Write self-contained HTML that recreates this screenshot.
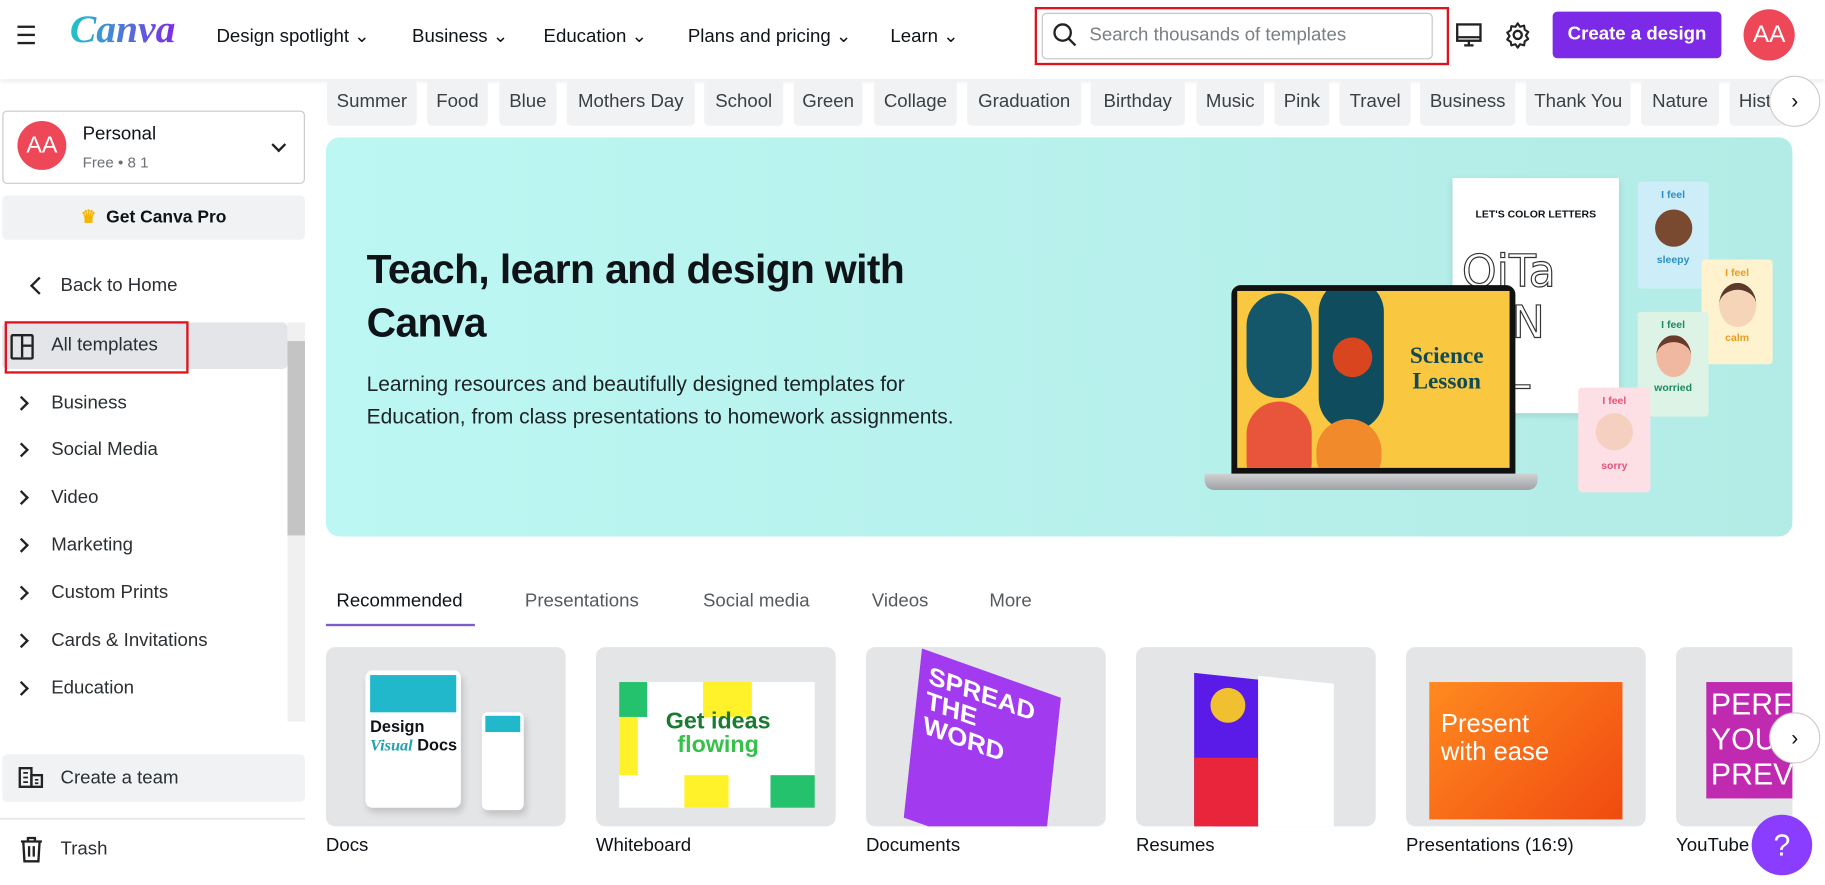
<!DOCTYPE html>
<html><head><meta charset="utf-8"><style>
html,body{margin:0;padding:0;width:1825px;height:884px;overflow:hidden;background:#fff}
#w{position:absolute;left:0;top:0;width:1568px;height:760px;transform:scale(1.1639);transform-origin:0 0;font-family:"Liberation Sans",sans-serif;color:#0e1318}
.a{position:absolute}
.nav{font-size:16px;top:21px}
.chip{position:absolute;top:68px;height:40px;line-height:40px;background:#f1f2f4;border-radius:4px;font-size:16px;color:#3b4044;text-align:center}
.side{position:absolute;left:44px;font-size:16px;color:#2a2f33}
.chev{position:absolute;left:14px;width:7px;height:7px;border-right:2px solid #222;border-top:2px solid #222;transform:rotate(45deg)}
.card{position:absolute;top:556px;width:206px;height:154px;background:#e4e5e7;border-radius:8px;overflow:hidden}
.lbl{position:absolute;top:718px;font-size:16px}
.tab{position:absolute;top:508px;font-size:16px;color:#555a5e}
</style></head><body><div id="w">
<div class="a" style="left:0;top:0;width:1568px;height:68px;background:#fff;box-shadow:0 2px 4px rgba(0,0,0,.08)"></div>
<div class="a" style="left:15px;top:22px;width:15px;height:2px;background:#222;box-shadow:0 7px 0 #222,0 14px 0 #222"></div>
<div class="a" style="left:60px;top:7px;font-family:'Liberation Serif',serif;font-style:italic;font-weight:bold;font-size:34px;background:linear-gradient(90deg,#20c4cb,#7d2ae8);-webkit-background-clip:text;color:transparent">Canva</div>
<div class="a nav" style="left:186px">Design spotlight ⌄</div>
<div class="a nav" style="left:354px">Business ⌄</div>
<div class="a nav" style="left:467px">Education ⌄</div>
<div class="a nav" style="left:591px">Plans and pricing ⌄</div>
<div class="a nav" style="left:765px">Learn ⌄</div>
<div class="a" style="left:889px;top:6px;width:352px;height:46px;border:2px solid #e0131d"></div>
<div class="a" style="left:895px;top:11px;width:334px;height:38px;border:1px solid #c4c6c9;border-radius:4px"></div>
<svg class="a" style="left:904px;top:19px" width="22" height="22" viewBox="0 0 22 22"><circle cx="9" cy="9" r="7" fill="none" stroke="#222" stroke-width="2"/><path d="M14 14l6 6" stroke="#222" stroke-width="2"/></svg>
<div class="a" style="left:936px;top:22px;font-size:16px;color:#7a7f83">Search thousands of templates</div>
<svg class="a" style="left:1250px;top:18px" width="24" height="24" viewBox="0 0 24 24"><rect x="2" y="3" width="20" height="14" fill="none" stroke="#222" stroke-width="2"/><path d="M2 14h20M8 21h8M12 17v4" stroke="#222" stroke-width="2"/></svg>
<svg class="a" style="left:1292px;top:18px" width="24" height="24" viewBox="0 0 24 24"><circle cx="12" cy="12" r="3.5" fill="none" stroke="#222" stroke-width="2"/><path d="M12 2l2 3 3.5-1 .5 3.5 3 2-2 3 2 3-3 2-.5 3.5-3.5-1-2 3-2-3-3.5 1L6 18l-3-2 2-3-2-3 3-2 .5-3.5L10 5z" fill="none" stroke="#222" stroke-width="1.8" stroke-linejoin="round"/></svg>
<div class="a" style="left:1334px;top:10px;width:145px;height:40px;background:#7d2ae8;border-radius:4px;color:#fff;font-weight:bold;font-size:16px;line-height:40px;text-align:center">Create a design</div>
<div class="a" style="left:1498px;top:8px;width:44px;height:44px;border-radius:50%;background:#ee4758;color:#fff;font-size:21px;line-height:44px;text-align:center">AA</div>
<div class="chip" style="left:281px;width:77px">Summer</div>
<div class="chip" style="left:367px;width:52px">Food</div>
<div class="chip" style="left:429px;width:49px">Blue</div>
<div class="chip" style="left:487px;width:110px">Mothers Day</div>
<div class="chip" style="left:605px;width:68px">School</div>
<div class="chip" style="left:682px;width:59px">Green</div>
<div class="chip" style="left:751px;width:71px">Collage</div>
<div class="chip" style="left:831px;width:98px">Graduation</div>
<div class="chip" style="left:937px;width:81px">Birthday</div>
<div class="chip" style="left:1028px;width:58px">Music</div>
<div class="chip" style="left:1095px;width:47px">Pink</div>
<div class="chip" style="left:1151px;width:61px">Travel</div>
<div class="chip" style="left:1220px;width:82px">Business</div>
<div class="chip" style="left:1311px;width:90px">Thank You</div>
<div class="chip" style="left:1410px;width:67px">Nature</div>
<div class="chip" style="left:1486px;width:50px;text-align:left;padding-left:8px;overflow:hidden">History</div>
<div class="a" style="left:1520px;top:65px;width:44px;height:44px;border-radius:50%;background:#fff;border:1px solid #ccc;box-sizing:border-box;text-align:center;line-height:42px;font-size:18px">›</div>
<div class="a" style="left:2px;top:95px;width:260px;height:63px;border:1px solid #c8c9cc;border-radius:4px;box-sizing:border-box"></div>
<div class="a" style="left:15px;top:104px;width:42px;height:42px;border-radius:50%;background:#ee4758;color:#fff;font-size:20px;line-height:42px;text-align:center">AA</div>
<div class="a" style="left:71px;top:107px;font-size:16px">Personal</div>
<div class="a" style="left:71px;top:132px;font-size:13px;color:#6b7075">Free • 8 1</div>
<div class="a" style="left:235px;top:120px;width:7px;height:7px;border-right:2px solid #222;border-bottom:2px solid #222;transform:rotate(45deg)"></div>
<div class="a" style="left:2px;top:168px;width:260px;height:38px;background:#f1f2f4;border-radius:4px;text-align:center;line-height:38px;font-size:15px;font-weight:bold"><span style="color:#f5b400">♛</span>&nbsp; Get Canva Pro</div>
<div class="a" style="left:28px;top:240px;width:9px;height:9px;border-left:2px solid #222;border-bottom:2px solid #222;transform:rotate(45deg)"></div>
<div class="side" style="left:52px;top:237px">Back to Home</div>
<div class="a" style="left:2px;top:277px;width:245px;height:40px;background:#e3e5e8;border-radius:4px"></div>
<div class="a" style="left:4px;top:276px;width:154px;height:41px;border:2px solid #e0131d"></div>
<div class="a" style="left:9px;top:287px;width:16px;height:18px;border:2px solid #222;border-radius:2px"></div>
<div class="a" style="left:18px;top:287px;width:2px;height:20px;background:#222"></div>
<div class="a" style="left:19px;top:296px;width:8px;height:2px;background:#222"></div>
<div class="side" style="top:288px">All templates</div>
<div class="a" style="left:247px;top:277px;width:15px;height:343px;background:#f0f0f0"></div>
<div class="a" style="left:247px;top:293px;width:15px;height:167px;background:#c4c4c4"></div>
<div class="chev" style="top:342px"></div><div class="side" style="top:338px">Business</div>
<div class="chev" style="top:382px"></div><div class="side" style="top:378px">Social Media</div>
<div class="chev" style="top:423px"></div><div class="side" style="top:419px">Video</div>
<div class="chev" style="top:464px"></div><div class="side" style="top:460px">Marketing</div>
<div class="chev" style="top:505px"></div><div class="side" style="top:501px">Custom Prints</div>
<div class="chev" style="top:546px"></div><div class="side" style="top:542px">Cards &amp; Invitations</div>
<div class="chev" style="top:587px"></div><div class="side" style="top:583px">Education</div>
<div class="a" style="left:2px;top:648px;width:260px;height:41px;background:#f1f2f4;border-radius:4px"></div>
<svg class="a" style="left:15px;top:658px" width="24" height="20" viewBox="0 0 24 20"><rect x="2" y="2" width="10" height="16" fill="none" stroke="#222" stroke-width="2"/><rect x="12" y="8" width="9" height="10" fill="none" stroke="#222" stroke-width="2"/><path d="M5 6h4M5 10h4M5 14h4M15 12h3M15 15h3" stroke="#222" stroke-width="1.5"/></svg>
<div class="side" style="left:52px;top:660px">Create a team</div>
<div class="a" style="left:0;top:703px;width:262px;height:1px;background:#dadbdd"></div>
<svg class="a" style="left:16px;top:718px" width="22" height="24" viewBox="0 0 22 24"><path d="M2 5h18M8 5V2h6v3M4 5l1 17h12l1-17M9 9v9M13 9v9" fill="none" stroke="#222" stroke-width="2"/></svg>
<div class="side" style="left:52px;top:721px">Trash</div>
<div class="a" style="left:280px;top:118px;width:1260px;height:343px;border-radius:12px;background:linear-gradient(90deg,#bcf7f3,#b3ebe6);overflow:hidden">
 <div class="a" style="left:35px;top:91px;font-size:35px;font-weight:bold;line-height:46px;letter-spacing:-.5px">Teach, learn and design with<br>Canva</div>
 <div class="a" style="left:35px;top:198px;font-size:18px;line-height:28px;color:#1d2226">Learning resources and beautifully designed templates for<br>Education, from class presentations to homework assignments.</div>
 <div class="a" style="left:968px;top:35px;width:143px;height:202px;background:#fff;box-shadow:0 2px 6px rgba(0,0,0,.12);overflow:hidden">
  <div class="a" style="left:0;top:26px;width:143px;text-align:center;font-size:9px;font-weight:bold">LET'S COLOR LETTERS</div>
  <div class="a" style="left:8px;top:58px;font-size:38px;color:#fff;-webkit-text-stroke:1px #333;line-height:44px;font-family:'DejaVu Sans',sans-serif">QiTa<br>GfN<br>krL</div>
 </div>
 <div class="a" style="left:1127px;top:38px;width:61px;height:92px;background:#cdeef9;border-radius:3px;text-align:center;font-size:9px;color:#2a8fc7;font-weight:bold;padding-top:6px;box-sizing:border-box">I feel<div style="width:32px;height:32px;border-radius:50%;background:#7a4a30;margin:8px auto 6px"></div>sleepy</div>
 <div class="a" style="left:1182px;top:105px;width:61px;height:90px;background:#fff3cf;border-radius:3px;text-align:center;font-size:9px;color:#e99b22;font-weight:bold;padding-top:6px;box-sizing:border-box">I feel<div style="width:32px;height:32px;border-radius:50%;background:#f5d4b8;border-top:6px solid #5a3a2a;margin:4px auto 4px"></div>calm</div>
 <div class="a" style="left:1127px;top:150px;width:61px;height:90px;background:#dcf3e6;border-radius:3px;text-align:center;font-size:9px;color:#1e8a5e;font-weight:bold;padding-top:6px;box-sizing:border-box">I feel<div style="width:30px;height:30px;border-radius:50%;background:#f0b8a0;border-top:6px solid #6a3a2a;margin:4px auto 4px"></div>worried</div>
 <div class="a" style="left:1076px;top:215px;width:62px;height:90px;background:#fde0e6;border-radius:3px;text-align:center;font-size:9px;color:#e5527a;font-weight:bold;padding-top:6px;box-sizing:border-box">I feel<div style="width:32px;height:32px;border-radius:50%;background:#f5d0c0;margin:6px auto 8px"></div>sorry</div>
 <div class="a" style="left:778px;top:127px;width:244px;height:162px;background:#111;border-radius:8px 8px 0 0"></div>
 <div class="a" style="left:783px;top:132px;width:234px;height:152px;background:#f9c840;overflow:hidden">
  <div class="a" style="left:8px;top:2px;width:56px;height:90px;border-radius:28px;background:#14566a"></div>
  <div class="a" style="left:8px;top:95px;width:56px;height:80px;border-radius:28px;background:#e8553a"></div>
  <div class="a" style="left:70px;top:-10px;width:56px;height:130px;border-radius:28px;background:#0f4d5e"></div>
  <div class="a" style="left:82px;top:40px;width:34px;height:34px;border-radius:50%;background:#d9451e"></div>
  <div class="a" style="left:68px;top:110px;width:56px;height:60px;border-radius:28px;background:#f08a2a"></div>
  <div class="a" style="left:130px;top:45px;width:100px;text-align:center;font-family:'Liberation Serif',serif;font-weight:bold;font-size:20px;line-height:22px;color:#114a52">Science<br>Lesson</div>
 </div>
 <div class="a" style="left:755px;top:289px;width:286px;height:14px;background:linear-gradient(#cfd1d3,#9ea1a4);border-radius:0 0 8px 8px"></div>
</div>
<div class="tab" style="left:289px;color:#0e1318">Recommended</div>
<div class="a" style="left:280px;top:536px;width:128px;height:2px;background:#7d5cc6"></div>
<div class="tab" style="left:451px">Presentations</div>
<div class="tab" style="left:604px">Social media</div>
<div class="tab" style="left:749px">Videos</div>
<div class="tab" style="left:850px">More</div>
<div class="card" style="left:280px"><div class="a" style="left:34px;top:20px;width:82px;height:118px;background:#fff;border-radius:6px;box-shadow:2px 4px 6px rgba(0,0,0,.15)"><div style="margin:4px;height:32px;background:#21b8cc"></div><div style="font-size:14px;font-weight:bold;padding-left:4px;line-height:16px">Design<br><i style="color:#21a0b0;font-family:'Liberation Serif'">Visual</i> Docs</div></div><div class="a" style="left:134px;top:56px;width:36px;height:84px;background:#fff;border-radius:5px;box-shadow:2px 4px 6px rgba(0,0,0,.15)"><div style="margin:3px;height:14px;background:#21b8cc"></div></div></div>
<div class="card" style="left:512px"><div class="a" style="left:20px;top:30px;width:168px;height:108px;background:#fff"><div class="a" style="left:0;top:0;width:24px;height:30px;background:#25c26e"></div><div class="a" style="left:72px;top:0;width:42px;height:30px;background:#fff22a"></div><div class="a" style="left:0;top:30px;width:16px;height:50px;background:#fff22a"></div><div class="a" style="left:56px;top:80px;width:38px;height:28px;background:#fff22a"></div><div class="a" style="left:130px;top:80px;width:38px;height:28px;background:#25c26e"></div><div class="a" style="left:30px;top:24px;font-size:20px;font-weight:bold;color:#1a7a30;text-align:center;line-height:20px;width:110px">Get ideas<br><span style="color:#36c24a">flowing</span></div></div></div>
<div class="card" style="left:744px"><div class="a" style="left:40px;top:20px;width:120px;height:150px;background:#a23bf0;transform:skewY(14deg) rotate(6deg)"><div style="color:#fff;font-weight:bold;font-size:22px;line-height:22px;padding:10px 8px">SPREAD<br>THE WORD</div></div></div>
<div class="card" style="left:976px"><div class="a" style="left:50px;top:25px;width:55px;height:130px;background:#5a1ae8;transform:skewY(6deg)"></div><div class="a" style="left:50px;top:95px;width:55px;height:60px;background:#e8253a"></div><div class="a" style="left:105px;top:28px;width:65px;height:130px;background:#fff;transform:skewY(6deg)"></div><div class="a" style="left:64px;top:35px;width:30px;height:30px;border-radius:50%;background:#f0c030"></div></div>
<div class="card" style="left:1208px"><div class="a" style="left:20px;top:30px;width:166px;height:118px;background:linear-gradient(135deg,#ff8a20,#f04a10)"><div style="color:#fff;font-size:22px;line-height:24px;padding:24px 10px">Present<br>with ease</div></div></div>
<div class="card" style="left:1440px;width:100px;border-radius:8px 0 0 8px"><div class="a" style="left:26px;top:30px;width:80px;height:100px;background:#c02ab0"><div style="color:#fff;font-size:26px;line-height:30px;padding:4px">PERF<br>YOU<br>PREV</div></div></div>
<div class="a" style="left:1520px;top:612px;width:44px;height:44px;border-radius:50%;background:#fff;border:1px solid #ccc;box-sizing:border-box;text-align:center;line-height:42px;font-size:18px">›</div>
<div class="lbl" style="left:280px">Docs</div>
<div class="lbl" style="left:512px">Whiteboard</div>
<div class="lbl" style="left:744px">Documents</div>
<div class="lbl" style="left:976px">Resumes</div>
<div class="lbl" style="left:1208px">Presentations (16:9)</div>
<div class="lbl" style="left:1440px">YouTube</div>
<div class="a" style="left:1505px;top:700px;width:52px;height:52px;border-radius:50%;background:#8b3dff;color:#fff;font-size:26px;line-height:52px;text-align:center">?</div>
</div></body></html>
